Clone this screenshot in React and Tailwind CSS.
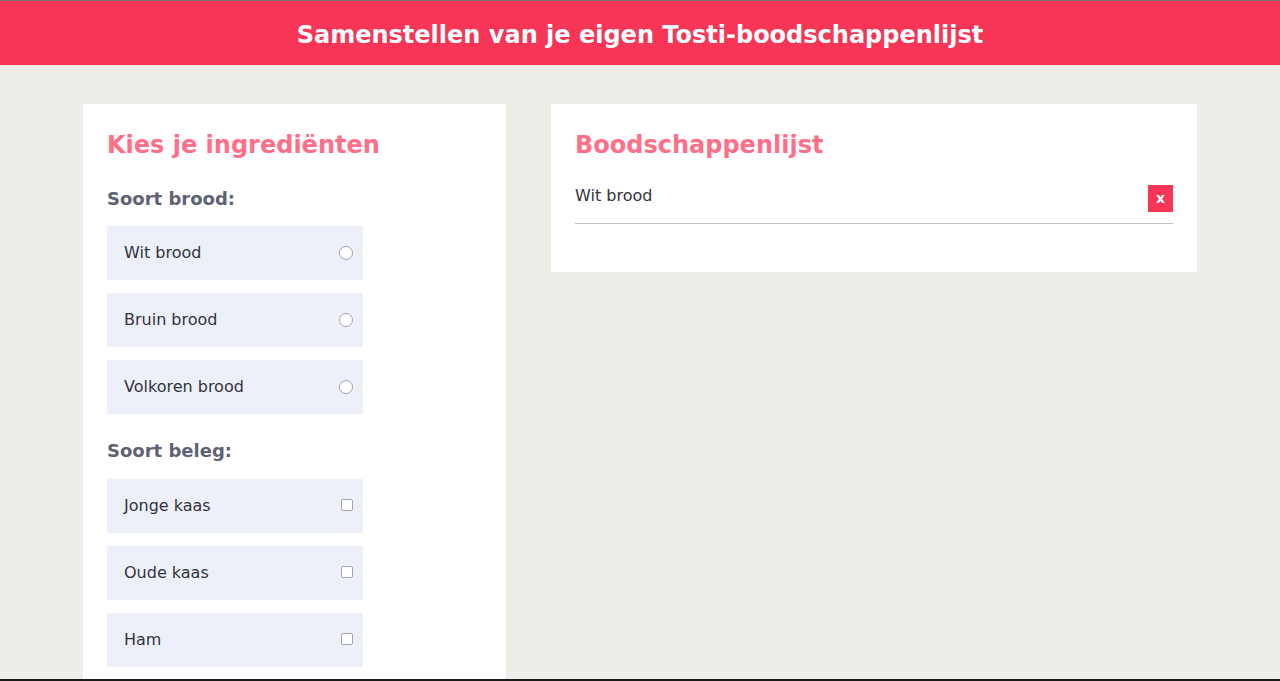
const BROOD = ['Wit brood', 'Bruin brood', 'Volkoren brood']
const BELEG = ['Jonge kaas', 'Oude kaas', 'Ham']

function Option({ label, type }) {
  return (
    <label className="flex items-center justify-between w-[256px] h-[54px] pl-[17px] pr-[10px] bg-[#edf0f8] text-[16px] text-[#333340]">
      <span>{label}</span>
      {type === 'radio' ? (
        <span className="w-[14px] h-[14px] rounded-full border border-[#a5a5a5] bg-white" />
      ) : (
        <span className="w-[12px] h-[12px] rounded-[2px] border border-[#a5a5a5] bg-white mb-[2px]" />
      )}
    </label>
  )
}

export default function App() {
  return (
    <div className="h-screen overflow-hidden flex flex-col bg-[#efede8] border-t border-[#6f6f6f] border-b-2 border-b-[#1a1a1a]" style={{ fontFamily: '"DejaVu Sans", Verdana, sans-serif' }}>
      <header className="h-[64px] shrink-0 bg-[#f63557] flex items-center justify-center pt-[3px]">
        <h1 className="text-white font-bold text-[24px]">Samenstellen van je eigen Tosti-boodschappenlijst</h1>
      </header>

      <main className="flex justify-center gap-[45px] pt-[39px]">
        <section className="w-[423px] bg-white px-[24px] pt-[26px] pb-6 self-start">
          <h2 className="text-[#ff7088] font-bold text-[24px] leading-[30px]">Kies je ingrediënten</h2>
          <h3 className="mt-[28px] text-[#5f6275] font-bold text-[18px] leading-[22px]">Soort brood:</h3>
          <div className="mt-[16px] flex flex-col gap-[13px]">
            {BROOD.map(b => <Option key={b} label={b} type="radio" />)}
          </div>
          <h3 className="mt-[26px] text-[#5f6275] font-bold text-[18px] leading-[22px]">Soort beleg:</h3>
          <div className="mt-[17px] flex flex-col gap-[13px]">
            {BELEG.map(b => <Option key={b} label={b} type="checkbox" />)}
          </div>
        </section>

        <section className="w-[646px] bg-white px-[24px] pt-[26px] pb-[48px] self-start">
          <h2 className="text-[#ff7088] font-bold text-[24px] leading-[30px]">Boodschappenlijst</h2>
          <div className="mt-[25px] flex items-start justify-between border-b border-[#c0c0c0] pb-[11px]">
            <span className="text-[16px] text-[#333340] leading-[20px] pt-[1px]">Wit brood</span>
            <button className="w-[25px] h-[27px] bg-[#f63557] text-white font-bold text-[14px] flex items-center justify-center">x</button>
          </div>
        </section>
      </main>
    </div>
  )
}
